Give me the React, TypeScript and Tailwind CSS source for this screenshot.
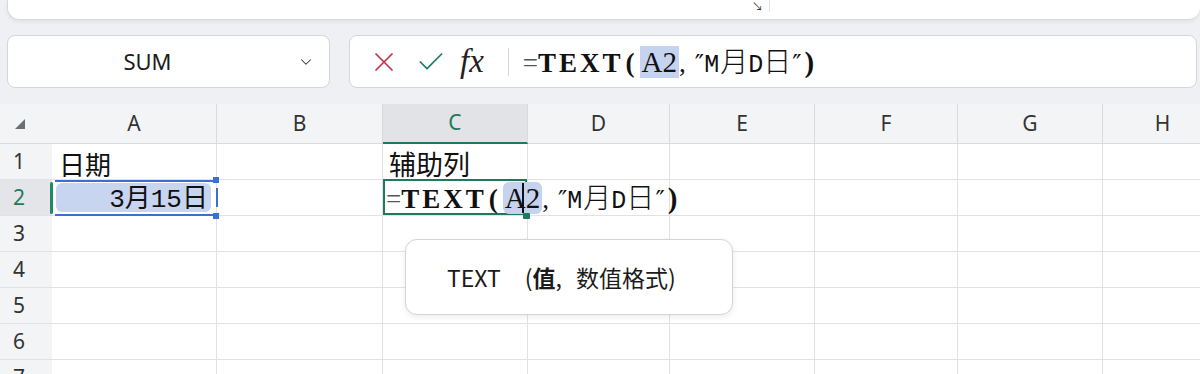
import { Check, ChevronDown, X } from "lucide-react";

const SANS = "font-['Noto_Sans','Noto_Sans_CJK_SC',sans-serif]";
const CJK = "font-['Noto_Sans_CJK_SC','Noto_Sans',sans-serif]";
const MONO = "font-['Liberation_Mono','Noto_Sans_CJK_SC',monospace]";
const SERIF = "font-['Liberation_Serif','Noto_Sans_CJK_SC',serif]";

const cols = [
  { key: "A", w: "w-[165px]" },
  { key: "B", w: "w-[166px]" },
  { key: "C", w: "w-[145px]" },
  { key: "D", w: "w-[142px]" },
  { key: "E", w: "w-[145px]" },
  { key: "F", w: "w-[143px]" },
  { key: "G", w: "w-[145px]" },
  { key: "H", w: "w-[120px]" },
];

const rows = [1, 2, 3, 4, 5, 6, 7];

// =TEXT(A2,"M月D日") as shown in the formula bar and in the edited cell
function Formula({ rounded }: { rounded?: boolean }) {
  return (
    <span className={`${SERIF} whitespace-nowrap text-[27px] leading-none text-[#111]`}>
      <span className="font-normal text-[#555]">=</span>
      <span className="font-bold tracking-[3px]">TEXT</span>
      <span className="ml-[2px] font-bold">(</span>
      <span className={`ml-[5px] bg-[#c6d3ef] px-[2px] text-[29px] ${rounded ? "rounded-[6px]" : ""}`}>A2</span>
      <span>,</span>
      <span className="ml-[9px] font-['DejaVu_Serif',serif] text-[25px]">″</span>
      <span className={`${MONO} text-[25px]`}>M</span>
      <span className={`${CJK} ml-[1px] text-[28px] font-light`}>月</span>
      <span className={`${MONO} text-[25px]`}>D</span>
      <span className={`${CJK} text-[28px] font-light`}>日</span>
      <span className="ml-[1px] font-['DejaVu_Serif',serif] text-[25px]">″</span>
      <span className="ml-[3px] text-[29px] font-bold">)</span>
    </span>
  );
}

function Cell({ col, row }: { col: string; row: number }) {
  const w = cols.find(c => c.key === col)!.w;
  const base = `${w} h-full shrink-0 border-r border-[#e0e2e5] bg-white`;

  if (col === "A" && row === 1) {
    return (
      <div className={`${base} flex items-end pl-[7px]`}>
        <span className={`${CJK} pb-[2px] text-[26px] leading-none text-[#111]`}>日期</span>
      </div>
    );
  }
  if (col === "C" && row === 1) {
    return (
      <div className={`${base} flex items-end pl-[6px]`}>
        <span className={`${CJK} pb-[2px] text-[27px] leading-none text-[#111]`}>辅助列</span>
      </div>
    );
  }
  if (col === "A" && row === 2) {
    return (
      <div className={`${base} relative`}>
        <div className="absolute left-[4px] right-[5px] top-[3px] bottom-[3px] rounded-[6px] bg-[#c7d5f1]" />
        <div className="absolute left-[3px] right-[3px] top-0 h-[2px] bg-[#3b6fd6]" />
        <div className="absolute left-[3px] right-[3px] bottom-[-1px] h-[2px] bg-[#3b6fd6]" />
        <div className="absolute left-[-2px] top-[2px] bottom-[1px] w-[3px] rounded-full bg-[#1f8a68]" />
        <div className="absolute right-[-3px] top-[-3px] h-[6px] w-[6px] bg-[#3b6fd6]" />
        <div className="absolute right-[-3px] bottom-[-4px] h-[6px] w-[6px] bg-[#3b6fd6]" />
        <div className="absolute right-[-2px] top-[8px] bottom-[8px] w-[2px] bg-[#3b6fd6]" />
        <div className="relative flex h-full items-center justify-end pr-[8px]">
          <span className={`${MONO} text-[26px] leading-none text-[#111]`}>
            3<span className={CJK}>月</span>15<span className={CJK}>日</span>
          </span>
        </div>
      </div>
    );
  }
  if (col === "C" && row === 2) {
    return (
      <div className={`${base} relative z-10 overflow-visible`}>
        <div className="absolute inset-0 top-[-1px] border-2 border-[#1f7a5c]" />
        <div className="absolute left-[3px] top-0 flex h-full items-center">
          <Formula rounded />
        </div>
        <div className="absolute left-[139px] top-[3px] h-[30px] w-[2px] bg-[#111]" />
        <div className="absolute right-[-3px] bottom-[-4px] h-[6px] w-[7px] rounded-[1px] bg-[#1f7a5c]" />
      </div>
    );
  }
  return <div className={base} />;
}

export default function App() {
  return (
    <div className={`${SANS} flex h-[374px] w-[1200px] flex-col overflow-hidden bg-[#eef0f3]`}>
      {/* ribbon edge */}
      <div className="ml-[7px] flex h-[20px] shrink-0 items-start justify-end rounded-b-[12px] border-b border-l border-[#d5d8dc] bg-white shadow-[0_2px_4px_rgba(0,0,0,0.06)]">
        <span className="mr-[6px] mt-[1px] text-[11px] leading-none text-[#333]">↘</span>
        <div className="mr-[430px] h-[12px] w-px bg-[#dcdfe3]" />
      </div>

      {/* name box + formula bar */}
      <div className="mt-[15px] flex h-[53px] shrink-0 gap-[19px] pl-[7px] pr-[3px]">
        <div className="flex w-[323px] items-center rounded-[8px] border border-[#d3d6da] bg-white">
          <div className="flex-1 pr-[10px] text-center text-[22px] text-[#1b1b1b]">SUM</div>
          <ChevronDown className="mr-[14px] h-[18px] w-[18px] text-[#333]" strokeWidth={1.4} />
        </div>
        <div className="flex flex-1 items-center rounded-[8px] border border-[#d3d6da] bg-white">
          <X className="ml-[18px] h-[32px] w-[32px] text-[#c3324d]" strokeWidth={1.3} />
          <Check className="ml-[15px] h-[32px] w-[32px] text-[#217a6b]" strokeWidth={1.3} />
          <span className="ml-[13px] font-['Liberation_Serif',serif] text-[33px] italic leading-none text-[#222]">fx</span>
          <div className="ml-[24px] h-[28px] w-px bg-[#d4d6d9]" />
          <div className="ml-[14px]">
            <Formula />
          </div>
        </div>
      </div>

      {/* grid */}
      <div className="relative mt-[16px] flex flex-1 flex-col">
        {/* column header */}
        <div className="flex h-[40px] shrink-0 border-b border-[#d8dadd] bg-[#f3f4f6]">
          <div className="flex w-[52px] shrink-0 items-center pl-[14px]">
            <svg width="12" height="12" viewBox="0 0 12 12">
              <path d="M11 1 L11 11 L1 11 Z" fill="#6b6e73" />
            </svg>
          </div>
          {cols.map(c =>
            c.key === "C" ? (
              <div
                key={c.key}
                className={`${c.w} mb-[-1px] flex shrink-0 items-center justify-center border-r border-b-2 border-r-[#d8dadd] border-b-[#1f7a5c] bg-[#e1e3e6] text-[21px] text-[#1f7a5c]`}
              >
                {c.key}
              </div>
            ) : (
              <div
                key={c.key}
                className={`${c.w} flex shrink-0 items-center justify-center border-r border-[#d8dadd] text-[21px] text-[#333]`}
              >
                {c.key}
              </div>
            )
          )}
        </div>

        {rows.map(r => (
          <div key={r} className="flex h-[36px] shrink-0 border-b border-[#e0e2e5]">
            <div
              className={`flex w-[52px] shrink-0 items-center pl-[13px] text-[21px] ${
                r === 2 ? "bg-[#e3e5e8] text-[#1f7a5c]" : "bg-[#f3f4f6] text-[#333]"
              }`}
            >
              {r}
            </div>
            {cols.map(c => (
              <Cell key={c.key} col={c.key} row={r} />
            ))}
          </div>
        ))}

        {/* function tooltip */}
        <div className="absolute left-[405px] top-[135px] z-20 flex h-[76px] w-[328px] items-center rounded-[12px] border border-[#d2d4d8] bg-white pl-[41px] shadow-[0_2px_6px_rgba(0,0,0,0.08)]">
          <span className={`${CJK} whitespace-nowrap text-[23px] text-[#1b1b1b]`}>
            TEXT<span className="ml-[24px]">(</span>
            <span className="font-bold">值</span>,<span className="ml-[14px]">数值格式)</span>
          </span>
        </div>
      </div>
    </div>
  );
}
